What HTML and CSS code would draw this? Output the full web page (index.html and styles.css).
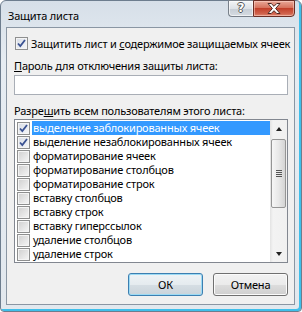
FILE: index.html
```html
<!DOCTYPE html>
<html lang="ru">
<head>
  <meta charset="UTF-8">
  <title>Защита листа</title>
  <link rel="stylesheet" href="styles.css">
</head>
<body>

  <!-- Dialog window -->
  <div class="window">

    <!-- Title bar: caption and help / close buttons -->
    <div class="titlebar">
      <span class="title">Защита листа</span>
      <div class="caption-buttons">
        <div class="caption-help">?</div>
        <div class="caption-close">
          <svg width="14" height="11" viewBox="0 0 14 11">
            <path d="M1 0.5 h3.2 l2.8 2.8 l2.8 -2.8 h3.2 l-4.4 5 l4.4 5 h-3.2 l-2.8 -2.8 l-2.8 2.8 h-3.2 l4.4 -5 z" fill="#fff" stroke="#4e2a24" stroke-width="1" stroke-linejoin="round"/>
          </svg>
        </div>
      </div>
    </div>
    <!-- End of title bar -->

    <div class="client">

      <label class="main-check">
        <span class="cb checked">
          <svg width="11" height="11" viewBox="0 0 11 11"><path d="M2 5.5 L4.3 8 L9 2" fill="none" stroke="#3a5292" stroke-width="1.8"/></svg>
        </span>
        <span>Защитить лист и <u>с</u>одержимое защищаемых ячеек</span>
      </label>

      <div class="field-label"><u>П</u>ароль для отключения защиты листа:</div>
      <div class="textbox"></div>

      <div class="field-label list-label">Разре<u>ш</u>ить всем пользователям этого листа:</div>

      <!-- Permissions list -->
      <div class="listbox">
        <ul class="items">
          <li class="item selected">
            <span class="cb checked"><svg width="11" height="11" viewBox="0 0 11 11"><path d="M2 5.5 L4.3 8 L9 2" fill="none" stroke="#3a5292" stroke-width="1.8"/></svg></span>
            <span class="item-text">выделение заблокированных ячеек</span>
          </li>
          <li class="item">
            <span class="cb checked"><svg width="11" height="11" viewBox="0 0 11 11"><path d="M2 5.5 L4.3 8 L9 2" fill="none" stroke="#3a5292" stroke-width="1.8"/></svg></span>
            <span class="item-text">выделение незаблокированных ячеек</span>
          </li>
          <li class="item"><span class="cb"></span><span class="item-text">форматирование ячеек</span></li>
          <li class="item"><span class="cb"></span><span class="item-text">форматирование столбцов</span></li>
          <li class="item"><span class="cb"></span><span class="item-text">форматирование строк</span></li>
          <li class="item"><span class="cb"></span><span class="item-text">вставку столбцов</span></li>
          <li class="item"><span class="cb"></span><span class="item-text">вставку строк</span></li>
          <li class="item"><span class="cb"></span><span class="item-text">вставку гиперссылок</span></li>
          <li class="item"><span class="cb"></span><span class="item-text">удаление столбцов</span></li>
          <li class="item"><span class="cb"></span><span class="item-text">удаление строк</span></li>
        </ul>

        <div class="scrollbar">
          <div class="arrow"><span class="arrow-up"></span></div>
          <div class="track">
            <div class="thumb">
              <span class="grip"></span>
            </div>
          </div>
          <div class="arrow"><span class="arrow-down"></span></div>
        </div>
      </div>
      <!-- End of permissions list -->

      <div class="buttons">
        <button class="btn default">ОК</button>
        <button class="btn">Отмена</button>
      </div>

    </div>
  </div>
  <!-- End of dialog window -->

</body>
</html>
```

FILE: styles.css
```css
html,
body {
  background-color: #ffffff;
  margin: 0;
}

body {
  color: #000;
  font-family: "Noto Sans", sans-serif;
  font-size: 11px;
  letter-spacing: -0.2px;
  line-height: 15px;
  white-space: nowrap;
}

.window {
  background: linear-gradient(to bottom, #d6dfe8, #e6ecf2 60px, #e2e8ee);
  border: 1px solid #6d7d8e;
  border-radius: 6px 6px 4px 4px;
  box-shadow: inset -2px -2px 0 #3fbfea;
  box-sizing: border-box;
  display: flex;
  flex-direction: column;
  height: 312px;
  width: 302px;
}

.titlebar {
  display: flex;
  height: 26px;
  padding-left: 7px;
}

.title {
  margin-top: 7px;
}

.caption-buttons {
  display: flex;
  height: 17px;
  margin-left: auto;
  margin-right: 6px;
  margin-top: -1px;
}

.caption-help {
  align-items: center;
  background: linear-gradient(to bottom, #f2f4f6, #dde2e7 50%, #c6cdd5 51%, #d5dbe1);
  border: 1px solid #78808a;
  border-radius: 0 0 0 4px;
  border-right: none;
  box-shadow: inset 0 0 0 1px rgba(255, 255, 255, 0.6);
  box-sizing: border-box;
  color: #fff;
  display: flex;
  font-family: "DejaVu Sans", sans-serif;
  font-size: 12px;
  font-weight: bold;
  justify-content: center;
  letter-spacing: 0;
  text-shadow: -1px 0 #555, 1px 0 #555, 0 -1px #555, 0 1px #555;
  width: 25px;
}

.caption-close {
  align-items: center;
  background: linear-gradient(to bottom, #e9a898, #d6725d 45%, #c2402a 50%, #d0634d 85%, #e08a73);
  border: 1px solid #6a2e25;
  border-radius: 0 0 4px 0;
  box-shadow: inset 0 0 0 1px rgba(255, 220, 210, 0.5);
  box-sizing: border-box;
  display: flex;
  justify-content: center;
  width: 42px;
}

.client {
  background-color: #f0f0f0;
  border: 1px solid #8a96a3;
  box-sizing: border-box;
  display: flex;
  flex-direction: column;
  height: 278px;
  margin-left: 5px;
  padding: 0 6px 0 7px;
  width: 289px;
}

.main-check {
  align-items: center;
  display: flex;
  height: 15px;
  margin-left: 1px;
  margin-top: 8px;
}

.main-check .cb {
  margin-right: 3px;
  margin-top: -1px;
}

.cb {
  align-items: center;
  background: linear-gradient(135deg, #cfcfcf, #f6f6f6);
  border: 1px solid #8e8f8f;
  box-shadow: inset 0 0 0 1px #f4f4f4;
  box-sizing: border-box;
  display: flex;
  flex-shrink: 0;
  height: 13px;
  justify-content: center;
  width: 13px;
}

.cb.checked {
  background: linear-gradient(135deg, #d8dde6, #f6f7f9);
}

.field-label {
  margin-top: 7px;
}

.list-label {
  margin-top: 8px;
}

.textbox {
  background-color: #fff;
  border: 1px solid #a9aeb6;
  box-sizing: border-box;
  height: 20px;
  margin-top: 2px;
}

.listbox {
  background-color: #fff;
  border: 1px solid #828790;
  box-sizing: border-box;
  display: flex;
  height: 144px;
  margin-top: 1px;
}

.items {
  flex: 1;
  list-style: none;
  margin: 0;
  padding: 1px 0 0 2px;
}

.item {
  align-items: center;
  display: flex;
  height: 14px;
}

.item-text {
  flex: 1;
  height: 14px;
  line-height: 14px;
  margin-left: 2px;
  padding-left: 1px;
}

.item.selected .item-text {
  background-color: #3399ff;
  color: #fff;
}

.scrollbar {
  background: linear-gradient(to right, #e3e3e3, #f3f3f3 3px, #f0f0f0);
  display: flex;
  flex-direction: column;
  width: 17px;
}

.arrow {
  align-items: center;
  display: flex;
  height: 17px;
  justify-content: center;
}

.arrow-up {
  border-bottom: 4px solid #222;
  border-left: 3.5px solid transparent;
  border-right: 3.5px solid transparent;
  height: 0;
  width: 0;
}

.arrow-down {
  border-left: 3.5px solid transparent;
  border-right: 3.5px solid transparent;
  border-top: 4px solid #222;
  height: 0;
  width: 0;
}

.track {
  flex: 1;
  padding: 2px 1px 0 1px;
}

.thumb {
  align-items: center;
  background: linear-gradient(to right, #f6f6f6, #e8e8e8 50%, #d4d4d4);
  border: 1px solid #959595;
  border-radius: 2px;
  box-sizing: border-box;
  display: flex;
  height: 69px;
  justify-content: center;
  width: 15px;
}

.grip {
  background: repeating-linear-gradient(to bottom, #555 0, #555 1px, transparent 1px, transparent 2px);
  height: 7px;
  width: 6px;
}

.buttons {
  display: flex;
  gap: 10px;
  justify-content: flex-end;
  margin-top: 10px;
}

.btn {
  background: linear-gradient(to bottom, #f2f2f2, #ebebeb 50%, #dddddd 51%, #cfcfcf);
  border: 1px solid #707070;
  border-radius: 3px;
  box-shadow: inset 0 0 0 1px #fbfbfb;
  color: #000;
  font-family: "Noto Sans", sans-serif;
  font-size: 11px;
  height: 23px;
  letter-spacing: -0.2px;
  padding: 0;
  width: 75px;
}

.btn.default {
  background: linear-gradient(to bottom, #eef3f6, #e5ebef 50%, #d6dee4 51%, #c9d3da);
  border-color: #3c7fb1;
  box-shadow: inset 0 0 0 1px #9cdaf4;
}
```
